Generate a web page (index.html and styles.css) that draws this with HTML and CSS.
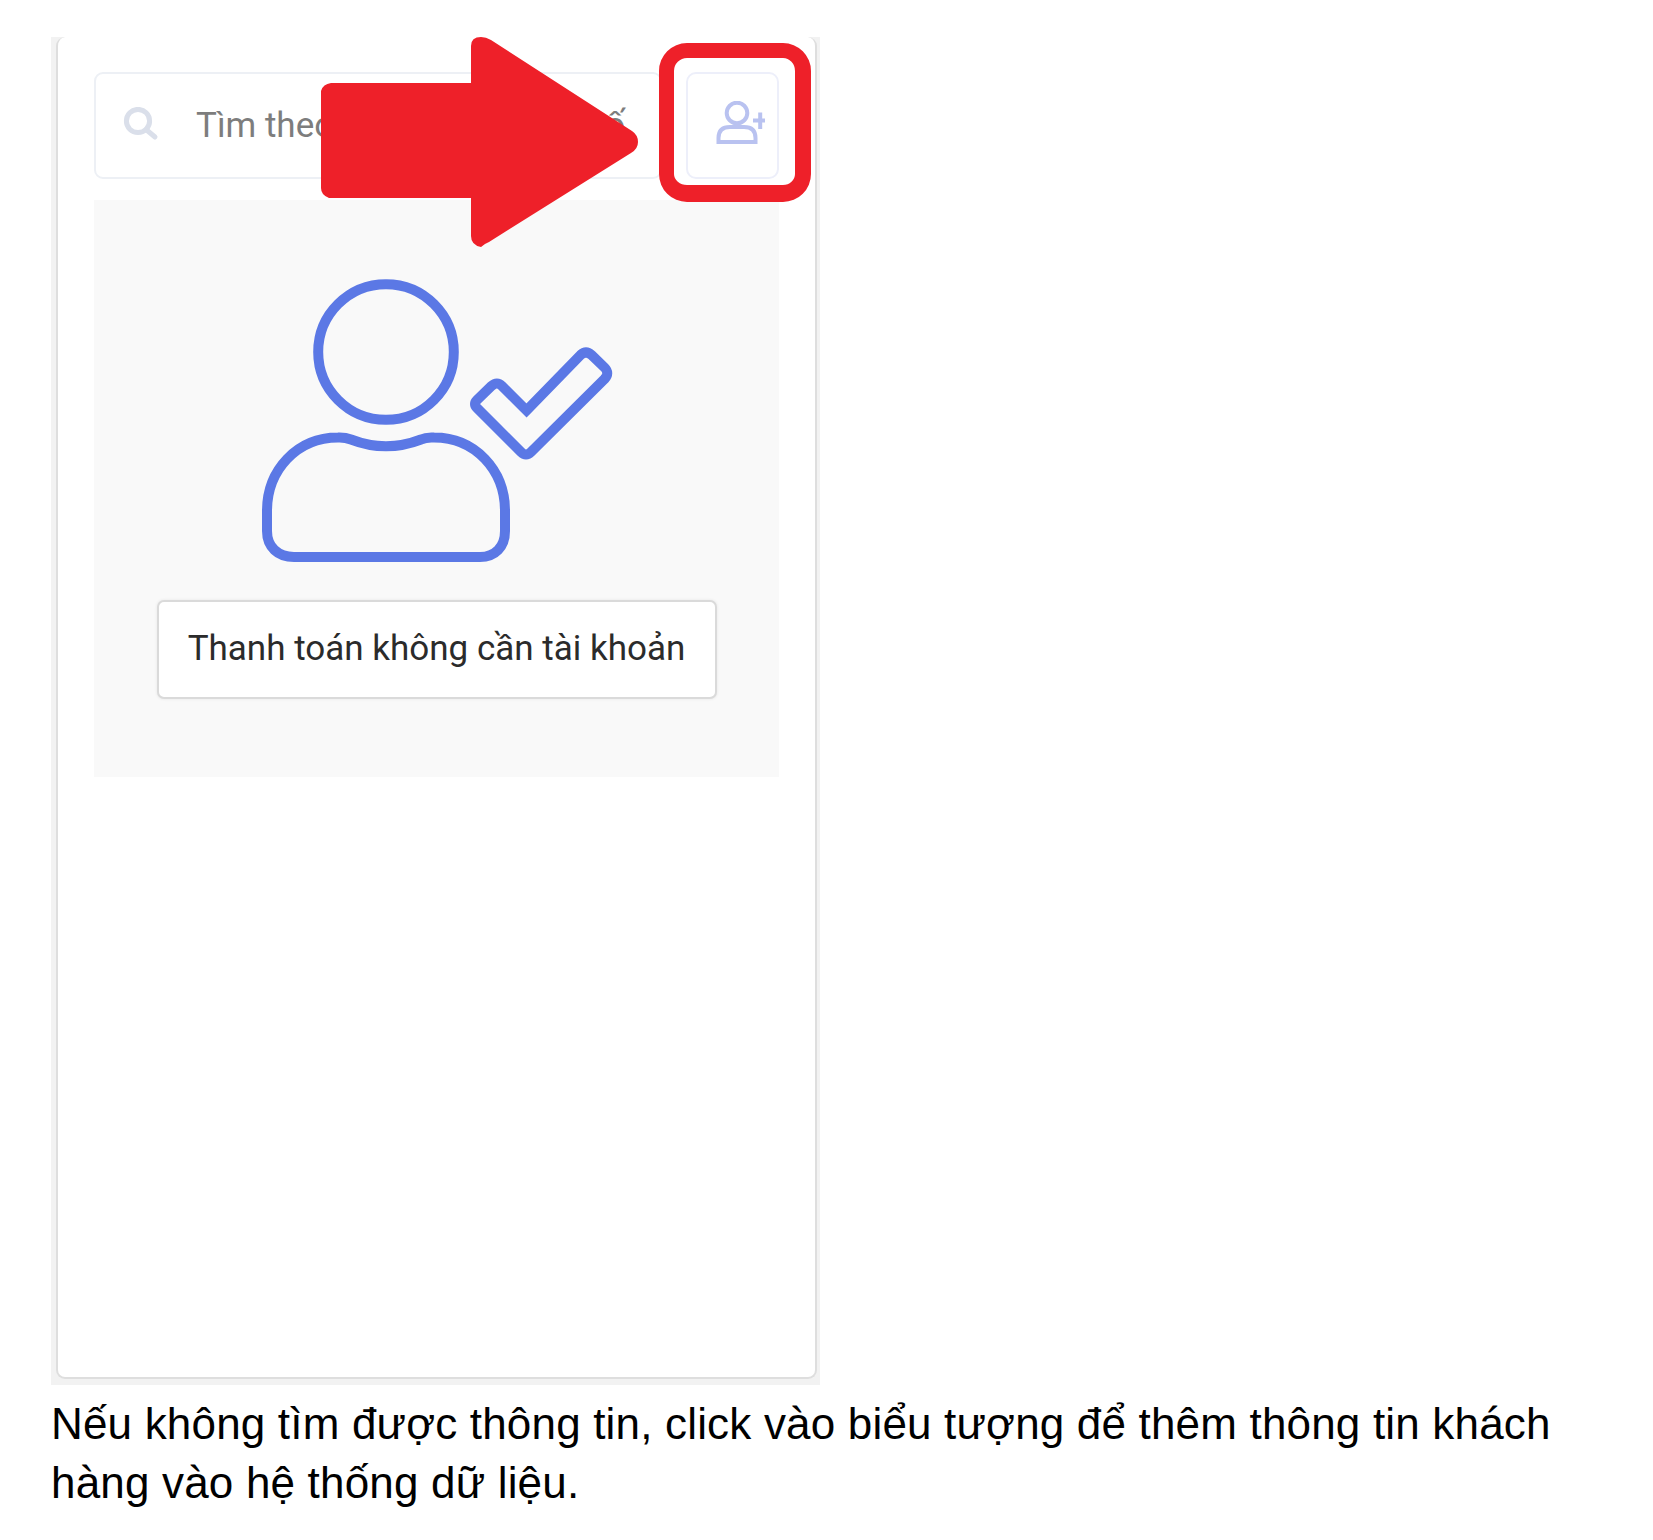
FILE: index.html
```html
<!DOCTYPE html>
<html lang="vi">
<head>
<meta charset="utf-8">
<title>Thêm khách hàng</title>
<link rel="stylesheet" href="styles.css">
</head>
<body>
<main class="page">
  <section class="frame">
    <div class="card">
      <div class="toolbar">
        <div class="search">
          <svg class="search-icon" width="36" height="34" viewBox="0 0 36 34"><circle cx="15" cy="14" r="11.600"/><path d="M23 22.500L32 30"/></svg>
          <span class="placeholder">Tìm theo <span class="fields">tên, SĐT hoặc mã s</span>ố</span>
        </div>
        <button class="add" aria-label="Thêm khách hàng">
          <svg width="50" height="44" viewBox="0 0 50 44"><circle cx="21" cy="12" r="10.300"/><path d="M2.500 41V37Q2.500 26 14 26H28Q39.500 26 39.500 37V41ZM44.200 11.500V28M37 19.500H49"/></svg>
        </button>
      </div>
      <div class="panel">
        <svg class="person" width="352" height="284" viewBox="261 279 352 284">
          <circle cx="386" cy="352" r="67.800"/>
          <path d="M338 437.500Q345 437.200 351 439.500Q386 453 421 439.500Q426 437 434 437.500C475 437.500 505 470 505 511V531C505 547 495 557 480 557H294C278 557 267 547 267 531V511C267 470 297 437.500 338 437.500Z"/>
          <path d="M526.500 410.500L580.500 355Q586 350 591.500 355L604.500 367.500Q610 373 604.500 379L531 452Q526 457 521 452L477 408Q473 404 477 400L491.500 386Q497 381 502 386Z"/>
        </svg>
        <button class="guest">Thanh toán không cần tài khoản</button>
      </div>
      <svg class="arrow" width="320" height="212" viewBox="320 36 320 212"><path d="M331 83H471V46Q471 37 481 37Q486 37 491 40L632 131Q638 135 638 142Q638 149 631 153L489 242Q484 244 481 247Q471 245 471 236V198H329Q321 195 321 188V91Q323 84 331 83Z"/></svg>
      <div class="highlight"></div>
    </div>
  </section>
  <p class="caption">Nếu không tìm được thông tin, click vào biểu tượng để thêm thông tin khách<br>hàng vào hệ thống dữ liệu.</p>
</main>
</body>
</html>
```
FILE: styles.css
```css
* { box-sizing: border-box; }
body { margin: 0; background: #fff; font-family: Roboto, sans-serif; }
svg { display: block; flex: none; fill: none; }
button { font-family: inherit; margin: 0; padding: 0; }
.page { width: 1653px; height: 1540px; padding: 37px 51px 0; overflow: hidden; }
.frame { width: 769px; height: 1348px; padding: 0 3px 6px 5px; background: #f2f2f2; }
.card {
  position: relative;
  height: 1342px;
  padding: 35px 35px 0 36px;
  background: #fff;
  border: 2px solid #dedede;
  border-top: 0;
  border-radius: 9px;
}
.toolbar { display: flex; gap: 24px; height: 107px; }
.search {
  display: flex;
  align-items: center;
  width: 568px;
  padding-left: 27px;
  border: 2px solid #edf0f5;
  border-radius: 9px;
}
.search-icon { stroke: #dadfea; stroke-width: 5; stroke-linecap: round; }
.search-icon { margin-top: -4px; }
.placeholder { margin-left: 37px; font-size: 35px; color: #7d7d7d; white-space: nowrap; }
.fields { letter-spacing: -2.050px; }
.add {
  width: 93px;
  padding-left: 28px;
  background: #fff;
  border: 2px solid #edeffa;
  border-radius: 10px;
}
.add svg { stroke: #b9c2f0; stroke-width: 4; margin-top: -6px; }
.panel {
  display: flex;
  flex-direction: column;
  align-items: center;
  width: 685px;
  height: 577px;
  margin-top: 21px;
  padding-top: 79px;
  background: #f9f9f9;
}
.person { stroke: #5b78e5; stroke-width: 10; }
.guest {
  width: 560px;
  height: 99px;
  margin-top: 37px;
  padding-bottom: 3px;
  background: #fff;
  border: 2px solid #dadada;
  border-radius: 7px;
  box-shadow: 0 0 3px #e4e4e4;
  font-size: 35px;
  color: #2b2b2b;
  white-space: nowrap;
}
.arrow { position: absolute; left: 262px; top: -1px; fill: #ee2029; }
.highlight {
  position: absolute;
  left: 601px;
  top: 6px;
  width: 152px;
  height: 159px;
  border: 15px solid #ee2029;
  border-bottom-width: 17px;
  border-right-width: 16px;
  border-radius: 28px;
}
.caption {
  margin: 10px 0 0;
  font: 44px/58.500px "Liberation Sans", Arial, sans-serif;
  letter-spacing: 0.180px;
  color: #000;
  white-space: nowrap;
}
```
